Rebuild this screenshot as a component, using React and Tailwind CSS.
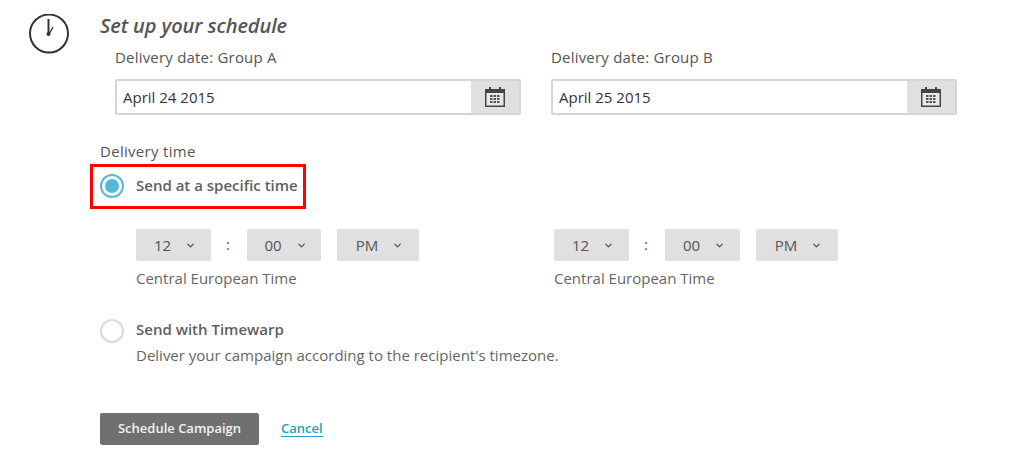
import { ChevronDown } from 'lucide-react';

function ClockIcon() {
    return (
        <svg width="40" height="40" viewBox="0 0 40 40" fill="none" stroke="#333" className="shrink-0">
            <circle cx="20" cy="19.5" r="19" strokeWidth="2" />
            <path d="M19.5 5 L19.5 20" strokeWidth="2" />
            <path d="M20.5 19.5 L24 13" strokeWidth="1.4" />
            <circle cx="19.5" cy="20" r="2" fill="#333" stroke="none" />
        </svg>
    );
}

function CalendarIcon() {
    return (
        <svg width="20" height="20" viewBox="0 0 20 20">
            <rect x="0" y="2" width="20" height="18" fill="#444" />
            <rect x="4" y="0" width="2" height="4" fill="#444" />
            <rect x="14" y="0" width="2" height="4" fill="#444" />
            <rect x="1.5" y="6" width="17" height="12.5" fill="#e8e8e8" />
            {[5, 8.5, 12].map((x) =>
                [8, 11, 14].map((y) => <rect key={`${x}-${y}`} x={x} y={y} width="2.5" height="2" fill="#555" />)
            )}
        </svg>
    );
}

function DateField({ label, value, className }) {
    return (
        <div className={`w-[406px] ${className}`}>
            <div className="text-[15px] leading-[20px] tracking-[0.2px] text-[#555]">{label}</div>
            <div className="flex h-[36px] mt-[12px] border-2 border-[#d5d5d5] rounded-[2px]">
                <div className="flex-1 pl-[6px] text-[15px] leading-[32px] text-[#333]">{value}</div>
                <div className="w-[48px] bg-[#e0e0e0] flex items-center justify-center">
                    <CalendarIcon />
                </div>
            </div>
        </div>
    );
}

function TimeSelect({ value, className }) {
    return (
        <div className={`h-[32px] bg-[#e0e0e0] rounded-[2px] flex items-center justify-center gap-[14px] pl-[3px] text-[15px] text-[#555] ${className}`}>
            <span>{value}</span>
            <ChevronDown className="w-[11px] h-[11px]" strokeWidth={3} />
        </div>
    );
}

function TimeRow({ minuteWidth, className }) {
    return (
        <div className={className}>
            <div className="flex items-center">
                <TimeSelect value="12" className="w-[75px]" />
                <div className="w-[34px] mr-[2px] text-center text-[15px] leading-[30px] h-[32px] text-[#555]">:</div>
                <TimeSelect value="00" className={minuteWidth} />
                <TimeSelect value="PM" className="w-[82px] ml-[16px]" />
            </div>
            <div className="mt-[7px] text-[15px] leading-[20px] text-[#666]">Central European Time</div>
        </div>
    );
}

export default function App() {
    return (
        <div className="w-[1020px] h-[474px] bg-white overflow-hidden flex pl-[29px] pt-[14px] font-['Open_Sans',sans-serif]">
            <ClockIcon />
            <div className="ml-[31px] flex-1">
                <h2 className="text-[20px] leading-[24px] font-semibold italic tracking-[-0.1px] text-[#555]">Set up your schedule</h2>
                <div className="flex pl-[15px] mt-[9px]">
                    <DateField label="Delivery date: Group A" value="April 24 2015" />
                    <DateField label="Delivery date: Group B" value="April 25 2015" className="ml-[30px]" />
                </div>

                <div className="mt-[26px] text-[15px] leading-[20px] tracking-[0.3px] text-[#555]">Delivery time</div>
                <div className="relative flex items-center h-[24px] mt-[13px] text-[15px] font-semibold text-[#5f5f5f]">
                    <div className="absolute left-[-10px] top-[-10px] w-[216px] h-[45px] border-[3px] border-[#ff0000]" />
                    <div className="w-[24px] h-[24px] rounded-full border-2 border-[#52bad5] flex items-center justify-center">
                        <div className="w-[14px] h-[14px] rounded-full bg-[#52bad5]" />
                    </div>
                    <span className="ml-[12px] mb-[2px]">Send at a specific time</span>
                </div>

                <div className="flex mt-[31px] pl-[36px]">
                    <TimeRow minuteWidth="w-[74px]" />
                    <TimeRow minuteWidth="w-[75px]" className="ml-[135px]" />
                </div>

                <div className="flex mt-[31px]">
                    <div className="w-[24px] h-[24px] rounded-full border-2 border-[#d9d9d9]" />
                    <div className="ml-[12px] -mt-[1px]">
                        <div className="text-[15px] leading-[22px] font-semibold text-[#5f5f5f]">Send with Timewarp</div>
                        <div className="mt-[4px] text-[15px] leading-[22px] text-[#666]">Deliver your campaign according to the recipient's timezone.</div>
                    </div>
                </div>

                <div className="flex items-center mt-[47px]">
                    <button className="w-[159px] h-[32px] bg-[#707070] rounded-[2px] text-[#f2f2f2] text-[13px] font-semibold">Schedule Campaign</button>
                    <a className="ml-[22px] -mt-[2px] text-[13px] leading-[16px] font-semibold text-[#2a9cb9] border-b border-[#2a9cb9]">Cancel</a>
                </div>
            </div>
        </div>
    );
}
